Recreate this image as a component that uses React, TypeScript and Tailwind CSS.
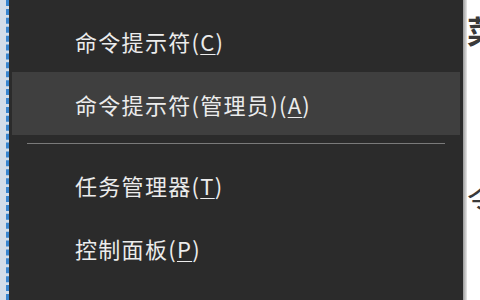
import React from "react";

const font = { fontFamily: '"Noto Sans CJK SC", "Noto Sans", sans-serif' };

function Item({ label, hint, active }: { label: string; hint: string; active?: boolean }) {
  return (
    <div className={`flex h-[63px] items-center pl-[63px] ${active ? "bg-[#3f3f3f]" : ""}`}>
      <span className="whitespace-nowrap pt-[1px] text-[22px] leading-none tracking-[1.3px] text-[#ececec]">
        {label}(
        <span className="underline decoration-1 underline-offset-[3px]">{hint}</span>)
      </span>
    </div>
  );
}

export default function App() {
  return (
    <div className="flex h-[300px] w-[480px] overflow-hidden bg-white" style={font}>
      <div className="w-[9px] shrink-0 bg-[#d3dde9] border-r-[3px] border-dashed border-[#3a86cf]" />
      <div className="w-[454px] shrink-0 bg-[#2b2b2b] px-[3px] pt-[9px]">
        <Item label="命令提示符" hint="C" />
        <Item label="命令提示符(管理员)" hint="A" active />
        <div className="mx-[15px] mt-[8px] mb-[9px] h-px bg-[#7a7a7a]" />
        <Item label="任务管理器" hint="T" />
        <Item label="控制面板" hint="P" />
        <Item label="文件资源管理器" hint="E" />
      </div>
      <div className="w-[4px] shrink-0 bg-gradient-to-r from-[#9a9a9a] to-[#e8e8e8]" />
      <div className="flex flex-1 flex-col overflow-hidden">
        <div className="mt-[14px] whitespace-nowrap text-[32px] font-bold leading-none text-[#3a3a3a]">菜单</div>
        <div className="mt-[136px] whitespace-nowrap text-[32px] leading-none text-[#3a3a3a]">令</div>
      </div>
    </div>
  );
}
